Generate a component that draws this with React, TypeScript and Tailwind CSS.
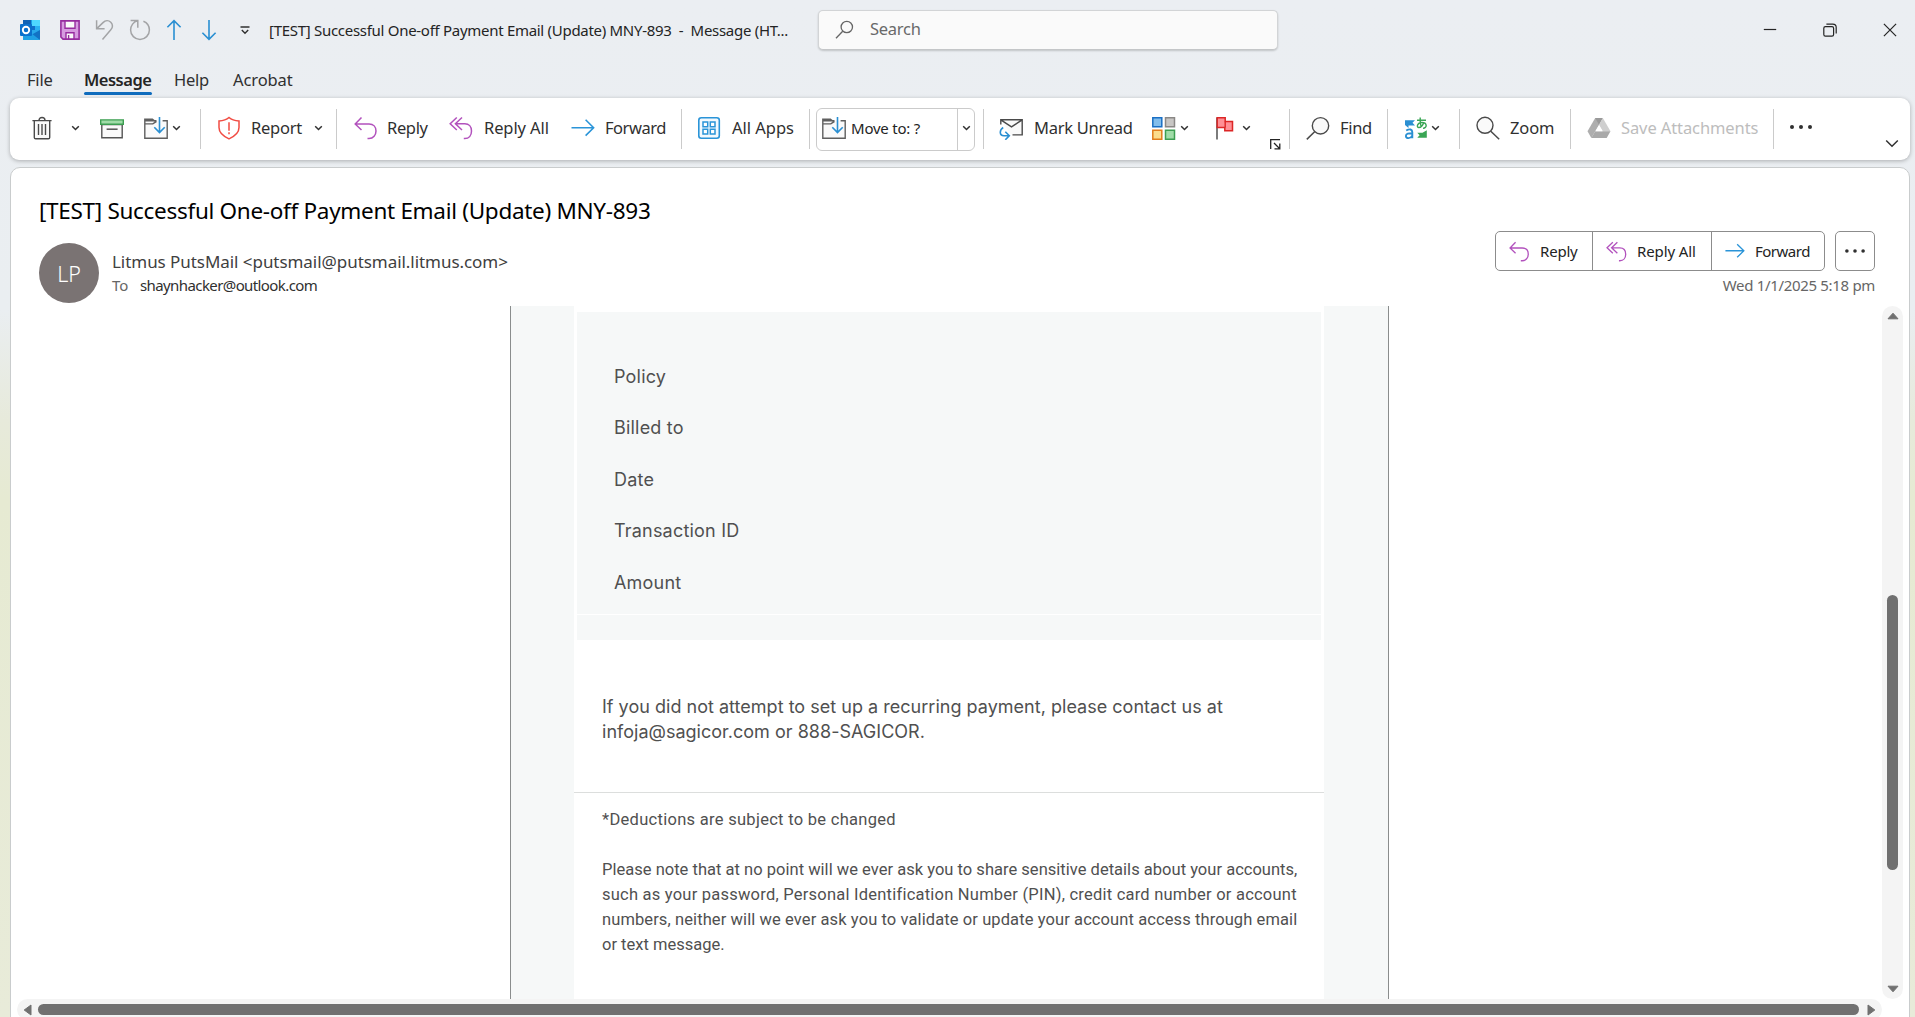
import React from "react";

type P = { className?: string };

const Chevron = ({ className = "" }: P) => (
  <svg width="10" height="8" viewBox="0 0 10 8" fill="none" stroke="#303030" strokeWidth="1.5" className={`shrink-0 ${className}`}>
    <path d="M1.2 2.2 4.5 5.500 7.800 2.200" />
  </svg>
);
const Sep = ({ className = "" }: P) => <div className={`h-10 w-px shrink-0 bg-[#cbcbcb] ${className}`} />;

const Icon = ({ className = "", size = 24, children }: { className?: string; size?: number; children: React.ReactNode }) => (
  <svg width={size} height={size} viewBox="0 0 24 24" fill="none" className={`shrink-0 ${className}`}>
    {children}
  </svg>
);

const ReplyIcon = ({ className = "", size = 24 }: P & { size?: number }) => (
  <Icon className={className} size={size}>
    <path d="M7.5 1.5 1.2 8l6.3 6M1.2 8H15c4.5 0 7 3 7 7s-2.7 7.6-7 7.6h-1.5" stroke="#b252bd" strokeWidth="1.5" />
  </Icon>
);
const ReplyAllIcon = ({ className = "", size = 24 }: P & { size?: number }) => (
  <Icon className={className} size={size}>
    <path d="M7.8 1.5 1.2 7.8l6.6 6.2M13 1.5 6.4 7.8l6.6 6.2M6.4 7.8h9.4c4.2 0 6.7 3 6.7 7.2 0 4.4-2.6 7.6-6.7 7.6h-1" stroke="#b252bd" strokeWidth="1.5" />
  </Icon>
);
const ForwardIcon = ({ className = "", size = 24 }: P & { size?: number }) => (
  <Icon className={className} size={size}>
    <path d="M.5 11.7h22M14.6 3.8l8 7.9-8 7.9" stroke="#2a94d8" strokeWidth="1.6" />
  </Icon>
);
const MoveFolderIcon = ({ className = "" }: P) => (
  <Icon className={className}>
    <path d="M.8 4.8h22.4v17.5H.8z" fill="#fafafa" />
    <path d="M12.5 4.8H.8v17.5h22.4V4.8h-4.6M.8 3.3h7.6l3.4 2.6-3 2H.8z" stroke="#5f5f5f" strokeWidth="1.4" />
    <path d="M15.5 1v16M10.3 11.3l5.2 5.3 5.2-5.3" stroke="#2a8fd2" strokeWidth="1.6" />
  </Icon>
);
const Dots = ({ className = "" }: P) => (
  <svg width="24" height="6" viewBox="0 0 24 6" fill="#303030" className={`shrink-0 ${className}`}>
    <circle cx="3" cy="3" r="2" />
    <circle cx="12" cy="3" r="2" />
    <circle cx="21" cy="3" r="2" />
  </svg>
);
const Label = ({ className = "", children }: { className?: string; children: React.ReactNode }) => (
  <span className={`shrink-0 whitespace-nowrap text-[16.5px] leading-6 ${className}`}>{children}</span>
);

const TitleBar = () => (
  <div className="flex h-[60px] shrink-0 items-center">
    <svg width="22" height="22" viewBox="0 0 22 22" className="ml-[19px] shrink-0">
      <path d="M4 2a1 1 0 0 1 1-1h15a1 1 0 0 1 1 1v9H4z" fill="#1a9de6" />
      <path d="M4 1h8v6H4z" fill="#0f62b5" />
      <path d="M13 1h8v6h-8z" fill="#4fd8ff" />
      <path d="M10 7h6v5h-6z" fill="#1170c9" />
      <path d="M16 7h5v5h-5z" fill="#2ab0f2" />
      <path d="M4 11h17v9a1 1 0 0 1-1 1H4z" fill="#28a8ea" />
      <path d="m21 11-9 5 9 5z" fill="#1272c4" />
      <path d="M4 14h8l9 7H5a1 1 0 0 1-1-1z" fill="#1fa0e4" />
      <rect x="1" y="5" width="12" height="12" rx="1" fill="#0a70cc" />
      <circle cx="7" cy="11" r="3.2" fill="none" stroke="#fff" strokeWidth="1.9" />
    </svg>
    <svg width="20" height="20" viewBox="0 0 20 20" className="ml-[19px] shrink-0">
      <path d="M.9.9h18.2v18.2H3L.9 17z" fill="#d69be0" stroke="#972d9f" strokeWidth="1.6" />
      <path d="M5 1h10v7.2H5z" fill="#fafafa" stroke="#972d9f" strokeWidth="1.4" />
      <path d="M6 19v-6.2h8V19z" fill="#fafafa" stroke="#972d9f" strokeWidth="1.4" />
      <path d="M8.6 15v4" stroke="#972d9f" strokeWidth="1.4" />
    </svg>
    <svg width="20" height="22" viewBox="0 0 20 22" fill="none" stroke="#a3a4a6" strokeWidth="1.5" className="ml-[15px] shrink-0">
      <path d="M1.6 1.2v8.6h8M1.8 9.6 8 3.6c2.4-2.4 5.7-2.3 7.8-.4 2.2 2.1 2.2 5.3 0 7.6L7.5 20.6" />
    </svg>
    <svg width="22" height="22" viewBox="0 0 22 22" fill="none" stroke="#a3a4a6" strokeWidth="1.5" className="ml-[14px] shrink-0">
      <path d="M1.600 1.600h7.200v7.200M8.600 1.800C4.500 2.800 1.600 6.600 1.600 11a9.400 9.400 0 1 0 18.800 0c0-4-2.500-7.400-6-8.800" />
    </svg>
    <svg width="16" height="22" viewBox="0 0 16 22" fill="none" stroke="#2a8fd2" strokeWidth="1.6" className="ml-[15px] shrink-0">
      <path d="M8 21V1.6M1.4 8.2 8 1.6l6.6 6.6" />
    </svg>
    <svg width="16" height="22" viewBox="0 0 16 22" fill="none" stroke="#2a8fd2" strokeWidth="1.6" className="ml-[19px] shrink-0">
      <path d="M8 1v19.4M1.4 13.8 8 20.4l6.6-6.6" />
    </svg>
    <svg width="10" height="9" viewBox="0 0 10 9" fill="none" stroke="#303030" strokeWidth="1.4" className="ml-[23px] shrink-0">
      <path d="M.5 1h9M1.8 4 5 7.2 8.2 4" />
    </svg>
    <span className="ml-[19px] w-[549px] shrink-0 whitespace-pre text-[15px] leading-6 tracking-[-0.29px] text-[#242424]">
      {"[TEST] Successful One-off Payment Email (Update) MNY-893  -  Message (HT..."}
    </span>
    <div className="flex h-10 w-[460px] shrink-0 items-center rounded-[5px] border border-[#d2d4d6] border-b-[#c4c6c8] bg-[#fafafa] shadow-[0_1px_2px_rgba(0,0,0,0.18)]">
      <svg width="20" height="20" viewBox="0 0 20 20" fill="none" stroke="#666" strokeWidth="1.3" className="ml-4 shrink-0">
        <circle cx="11.8" cy="7" r="5.7" />
        <path d="M7.7 11.2 1 18.2" />
      </svg>
      <span className="ml-[15px] mt-[-2px] text-[16.5px] leading-6 tracking-[-0.25px] text-[#696969]">Search</span>
    </div>
    <svg width="14" height="14" viewBox="0 0 14 14" stroke="#242424" strokeWidth="1.2" className="ml-auto shrink-0">
      <path d="M.8 6.5h12.4" />
    </svg>
    <svg width="14" height="14" viewBox="0 0 14 14" fill="none" stroke="#242424" strokeWidth="1.2" className="ml-[46px] shrink-0">
      <rect x=".8" y="3.6" width="9.8" height="9.6" rx="1.6" />
      <path d="M3.4 1.2h6.4a3.4 3.4 0 0 1 3.4 3.4v6" />
    </svg>
    <svg width="14" height="14" viewBox="0 0 14 14" stroke="#242424" strokeWidth="1.2" className="ml-[46px] mr-[18px] shrink-0">
      <path d="m.9.9 12.2 12.2M13.1.9.9 13.1" />
    </svg>
  </div>
);

const Tabs = () => (
  <div className="flex h-[38px] shrink-0 items-start pt-2 text-[16.5px] leading-6 text-[#303030]">
    <span className="ml-[27px] w-[57px] tracking-[-0.2px]">File</span>
    <div className="flex w-[68px] flex-col">
      <span className="whitespace-nowrap font-semibold tracking-[-0.5px] text-[#242424]">Message</span>
      <div className="h-[3px] rounded-full bg-[#0f6cbd]" />
    </div>
    <span className="ml-[22px] w-[59px] tracking-[-0.25px]">Help</span>
    <span className="tracking-[-0.1px]">Acrobat</span>
  </div>
);

const Ribbon = () => (
  <div className="ml-[10px] flex h-[62px] w-[1900px] shrink-0 items-center rounded-[9px] bg-white text-[#303030] shadow-[0_1px_4px_rgba(0,0,0,0.28)]">
    <Icon className="ml-5 -mt-[3px]">
      <path d="M4.5 5h15v16.5a1 1 0 0 1-1 1h-13a1 1 0 0 1-1-1z" fill="#fafafa" />
      <path d="M2.4 4.6h19.2M4.3 4.6v16.8c0 .8.5 1.3 1.3 1.3h12.8c.8 0 1.3-.5 1.3-1.3V4.6M9 4.3c0-1.8 1.2-2.8 3-2.8s3 1 3 2.8M8.5 8v11M12 8v11M15.5 8v11" stroke="#4a4a4a" strokeWidth="1.4" />
    </Icon>
    <Chevron className="ml-[17px] -mt-[3px]" />
    <Icon className="ml-[19px] -mt-[3px]">
      <path d="M1.8 8.5h20.4v13.2H1.8z" fill="#fafafa" stroke="#555" strokeWidth="1.4" />
      <path d="M.7 3.9h22.6v4.4H.7z" fill="#a0dca8" stroke="#3d9e52" strokeWidth="1.4" />
      <path d="M6.6 13.2h11" stroke="#555" strokeWidth="1.5" />
    </Icon>
    <MoveFolderIcon className="ml-[20px] -mt-[3px]" />
    <Chevron className="ml-[4px] -mt-[3px]" />
    <Sep className="ml-[18px]" />
    <Icon className="ml-4 -mt-[3px]">
      <path d="M12 1.500c2.500 2.300 5.800 3.300 10 3.500v6.600c0 5-3.700 8.500-10 11.300-6.300-2.800-10-6.300-10-11.300V5c4.200-.2 7.500-1.200 10-3.500zM12 6.300v8.400M12 16.200v2" stroke="#f14c43" strokeWidth="1.5" />
    </Icon>
    <Label className="ml-[10px] w-[51px] -mt-[2px] tracking-[-0.25px]">Report</Label>
    <Chevron className="ml-3 -mt-[3px]" />
    <Sep className="ml-3" />
    <ReplyIcon className="ml-[17px] -mt-[3px]" />
    <Label className="ml-[9px] -mt-[2px] w-[41px] tracking-[-0.35px]">Reply</Label>
    <ReplyAllIcon className="ml-[21px] -mt-[3px]" />
    <Label className="ml-[11px] -mt-[2px] w-[65px] tracking-[-0.1px]">Reply All</Label>
    <ForwardIcon className="ml-[22px] -mt-[3px]" />
    <Label className="ml-[10px] -mt-[2px] w-[61px] tracking-[-0.48px]">Forward</Label>
    <Sep className="ml-[15px]" />
    <Icon className="ml-[15px] -mt-[3px]">
      <rect x="1.8" y="1.8" width="20.5" height="20.5" rx="2.5" fill="#f2f9fe" stroke="#2a94d8" strokeWidth="1.6" />
      <path d="M6 6h4.7v4.7H6zM13.300 6H18v4.700h-4.700zM6 13.300h4.700V18H6zM13.300 13.300H18V18h-4.700z" fill="#fff" stroke="#2a94d8" strokeWidth="1.5" />
    </Icon>
    <Label className="ml-[11px] -mt-[2px] w-[62px] tracking-[-0.02px]">All Apps</Label>
    <Sep className="ml-[15px]" />
    <div className="ml-[6px] flex h-[43px] w-[159px] shrink-0 items-center rounded-[6px] border border-[#cbcbcb]">
      <MoveFolderIcon className="ml-[5px] -mt-[2px]" />
      <span className="ml-[5px] -mt-[2px] w-[106px] whitespace-nowrap text-[15px] leading-6 tracking-[-0.22px] text-[#242424]">Move to: ?</span>
      <div className="h-full w-px bg-[#cbcbcb]" />
      <Chevron className="ml-1 -mt-[2px]" />
    </div>
    <Sep className="ml-2" />
    <Icon className="ml-[15px] -mt-[3px]">
      <path d="M2 3.700h21v15.200H12" fill="#fafafa" />
      <path d="M1.800 8.500V3.700h21.400v15.200h-9.700M1.800 3.900l10.700 7 10.700-7" stroke="#4a4a4a" strokeWidth="1.4" />
      <path d="M4.200 11.500c-3.800 2.500-4.200 8 .8 8.300h4.600M6.300 15.700l4 4.100-4 4" stroke="#2a8fd2" strokeWidth="1.6" />
    </Icon>
    <Label className="ml-[11px] -mt-[2px] w-[99px] tracking-[-0.27px]">Mark Unread</Label>
    <Icon className="ml-[19px] -mt-[3px]">
      <path d="M.8 1.8h9v9h-9z" fill="#83beec" stroke="#1a6fc4" strokeWidth="1.5" />
      <path d="M13.5 1.8h9v9h-9z" fill="#c8c6c4" stroke="#8a8886" strokeWidth="1.5" />
      <path d="M.8 14.2h9v9h-9z" fill="#fbdc8c" stroke="#e07d1c" strokeWidth="1.5" />
      <path d="M13.5 14.2h9v9h-9z" fill="#a0dca8" stroke="#3d9e52" strokeWidth="1.5" />
    </Icon>
    <Chevron className="ml-1 -mt-[3px]" />
    <Icon className="ml-[23px] -mt-[3px]">
      <path d="M4 1.500v22" stroke="#444" strokeWidth="1.4" />
      <path d="M4.200 1.800h8v3.700h7.300v9.300h-7.700v-3.200H4.200z" fill="#ff8f95" stroke="#dc2626" strokeWidth="1.5" />
      <path d="M12.200 5.500v6" stroke="#dc2626" strokeWidth="1.4" />
    </Icon>
    <Chevron className="ml-[5px] -mt-[3px]" />
    <svg width="11" height="11" viewBox="0 0 11 11" fill="none" stroke="#242424" strokeWidth="1.3" className="ml-[18px] mt-[31px] shrink-0">
      <path d="M.7 10V.7H10M4 4l5.500 5.500M9.800 4.500v5.300H4.500" />
    </svg>
    <Sep className="ml-2" />
    <Icon className="ml-4 -mt-[3px]">
      <circle cx="14.5" cy="9.8" r="8.200" fill="#fafafa" stroke="#4a4a4a" strokeWidth="1.4" />
      <path d="M8.600 15.800.8 23.400" stroke="#4a4a4a" strokeWidth="1.5" />
    </Icon>
    <Label className="ml-[10px] -mt-[2px] w-[32px] tracking-[-0.3px]">Find</Label>
    <Sep className="ml-[15px]" />
    <Icon className="ml-4 -mt-[3px]">
      <path d="M1 4.200h10L8.500 6.800 11 9.400H4.500V12L1 9z" fill="#2a8fd2" />
      <path d="M2.200 14.500c3.500-2 6.100-1.300 6.100 1.800v6M8.300 17.200c-3.600 0-6.400.4-6.400 2.800 0 3 4.800 2.700 6.400-.4" stroke="#2a8fd2" strokeWidth="1.9" />
      <path d="M13 4.200h9M16.200 1.500c-.3 4 0 6.800 1 9.300M19.800 6.200c-1 3.300-3 5.300-5 5.300-2.600 0-1.600-5 3-5 5.500 0 5.700 5.500 1.200 5.900" stroke="#3aa655" strokeWidth="1.4" />
      <path d="M22.800 14.200v7.600h-9.500l2.300-2.500-2.300-2.500h5.200z" fill="#3aa655" />
    </Icon>
    <Chevron className="ml-[3px] -mt-[3px]" />
    <Sep className="ml-[18px]" />
    <Icon className="ml-4 -mt-[3px]">
      <circle cx="9" cy="9.300" r="8" fill="#fafafa" stroke="#4a4a4a" strokeWidth="1.4" />
      <path d="m14.800 15.200 8.400 8" stroke="#4a4a4a" strokeWidth="1.5" />
    </Icon>
    <Label className="ml-[10px] -mt-[2px] w-[44px] tracking-[-0.1px]">Zoom</Label>
    <Sep className="ml-4" />
    <Icon className="ml-4 -mt-[3px]">
      <path d="M8.200 2h7.600l-4 7.200L4.300 22 .5 15.300z" fill="#aeaeae" />
      <path d="M8.200 2h7.600l-3.800 6.800z" fill="#999" />
      <path d="M15.800 2l7.700 13.300h-7.700L12 8.800z" fill="#cfcfcf" />
      <path d="M8.200 15.300h15.300L19.700 22H4.300z" fill="#a9a9a9" />
      <path d="m12 9.200 3.500 6.100h-7z" fill="#fff" />
    </Icon>
    <Label className="ml-[10px] -mt-[2px] w-[138px] tracking-[-0.1px] text-[#bdbdbd]">Save Attachments</Label>
    <Sep className="ml-[14px]" />
    <Dots className="ml-[15px] -mt-[4px]" />
    <svg width="14" height="9" viewBox="0 0 14 9" fill="none" stroke="#303030" strokeWidth="1.5" className="ml-[72px] mt-[28px] shrink-0">
      <path d="M1.200 1.500 7 7.300l5.800-5.800" />
    </svg>
  </div>
);

const Action = ({ className = "", children }: { className?: string; children: React.ReactNode }) => (
  <div className={`flex h-full items-center border-[#8c8c8c] text-[15px] leading-6 text-[#242424] ${className}`}>{children}</div>
);

const Header = () => (
  <div className="flex h-[138px] shrink-0 justify-between pl-[28px] pr-[34px] pt-[27px]">
    <div className="flex flex-col">
      <h1 className="whitespace-nowrap text-[22.5px] leading-8 tracking-[-0.3px] text-black">
        [TEST] Successful One-off Payment Email (Update) MNY-893
      </h1>
      <div className="mt-4 flex">
        <div className="flex size-[60px] items-center justify-center rounded-full bg-[#7a7373] pt-[2px] text-[21.5px] font-light text-white">LP</div>
        <div className="ml-[13px] flex flex-col pt-[7px]">
          <span className="whitespace-nowrap text-[17px] leading-[23px] tracking-[-0.05px] text-[#404040]">Litmus PutsMail &lt;putsmail@putsmail.litmus.com&gt;</span>
          <span className="flex text-[15px] leading-6 text-[#303030]">
            <span className="w-[28px] text-[#666]">To</span>
            <span className="tracking-[-0.6px]">shaynhacker@outlook.com</span>
          </span>
        </div>
      </div>
    </div>
    <div className="mt-[36px] flex flex-col items-end">
      <div className="flex gap-[10px]">
        <div className="flex h-10 w-[330px] rounded-[5px] border border-[#8c8c8c]">
          <Action className="w-[97px] border-r pl-[13px]">
            <ReplyIcon size={21} />
            <span className="ml-[10px] -mt-px tracking-[-0.2px]">Reply</span>
          </Action>
          <Action className="w-[119px] border-r pl-[13px]">
            <ReplyAllIcon size={21} />
            <span className="ml-[10px] -mt-px tracking-[-0.1px]">Reply All</span>
          </Action>
          <Action className="pl-[13px]">
            <ForwardIcon size={20} />
            <span className="ml-[10px] -mt-px tracking-[-0.5px]">Forward</span>
          </Action>
        </div>
        <div className="flex size-10 items-center justify-center rounded-[5px] border border-[#8c8c8c]">
          <Dots className="-mt-px scale-90" />
        </div>
      </div>
      <span className="mt-[2px] text-[15px] leading-6 tracking-[-0.32px] text-[#666]">Wed 1/1/2025 5:18 pm</span>
    </div>
  </div>
);

const details = ["Policy", "Billed to", "Date", "Transaction ID", "Amount"];

const Email = () => (
  <div className="ml-[499px] flex h-[693px] w-[879px] shrink-0 border-x border-[#8a8d8d] bg-[#f6f8f8] pl-[63px] font-['Inter',sans-serif] text-[#505050]">
    <div className="flex w-[750px] flex-col bg-white">
      <div className="mx-[3px] mt-[6px] flex h-[302px] flex-col gap-[25.5px] bg-[#f6f8f8] pl-[37px] pt-[51.5px] text-[18px] leading-[26px]">
        {details.map((d) => (
          <span key={d} className="tracking-[0.2px]">{d}</span>
        ))}
      </div>
      <div className="mx-[3px] mt-px h-[25px] bg-[#f6f8f8]" />
      <p className="ml-[28px] mt-[54px] h-[98px] whitespace-nowrap text-[18px] leading-[25px] tracking-[0.02px]">
        If you did not attempt to set up a recurring payment, please contact us at
        <br />
        infoja@sagicor.com or 888-SAGICOR.
      </p>
      <div className="h-px bg-[#dcdedd]" />
      <div className="ml-[28px] mt-[14px] flex flex-col whitespace-nowrap font-['Roboto',sans-serif] text-[16.5px] leading-[25px]">
        <span className="tracking-[0.29px]">*Deductions are subject to be changed</span>
        <span className="mt-[25px] tracking-[0.02px]">Please note that at no point will we ever ask you to share sensitive details about your accounts,</span>
        <span className="tracking-[0.225px]">such as your password, Personal Identification Number (PIN), credit card number or account</span>
        <span className="tracking-[0.095px]">numbers, neither will we ever ask you to validate or update your account access through email</span>
        <span>or text message.</span>
      </div>
    </div>
  </div>
);

export default function App() {
  return (
    <div className="flex h-[1017px] w-[1915px] flex-col overflow-hidden bg-[linear-gradient(180deg,#ebeef2_0px,#eaeef1_310px,#e7eadb_420px,#e6ead2_500px,#e8ebd9_1017px)] font-['Noto_Sans',sans-serif]">
      <TitleBar />
      <Tabs />
      <Ribbon />
      <div className="ml-[10px] mt-[7px] flex h-[860px] w-[1900px] shrink-0 flex-col rounded-t-[10px] border border-[#c9cccd] bg-white">
        <Header />
        <div className="flex h-[693px] shrink-0">
          <Email />
          <div className="ml-[493px] flex w-[21px] flex-col items-center rounded-full bg-[#f4f4f4]">
            <svg width="12" height="8" viewBox="0 0 12 8" className="mt-[6px]" fill="#707070" stroke="#707070" strokeLinejoin="round">
              <path d="M6 1.200 11 6.800H1z" />
            </svg>
            <div className="mt-[275px] h-[275px] w-[11px] rounded-full bg-[#707070]" />
            <svg width="12" height="8" viewBox="0 0 12 8" className="mb-[6px] mt-auto" fill="#707070" stroke="#707070" strokeLinejoin="round">
              <path d="M6 6.800 11 1.200H1z" />
            </svg>
          </div>
        </div>
        <div className="ml-[6px] flex h-[21px] w-[1865px] shrink-0 items-center rounded-full bg-[#f4f4f4]">
          <svg width="9" height="12" viewBox="0 0 9 12" className="ml-[6px]" fill="#707070" stroke="#707070" strokeLinejoin="round">
            <path d="M1.200 6 8 1v10z" />
          </svg>
          <div className="ml-[6px] h-[11px] w-[1821px] rounded-full bg-[#707070]" />
          <svg width="9" height="12" viewBox="0 0 9 12" className="ml-[8px]" fill="#707070" stroke="#707070" strokeLinejoin="round">
            <path d="M7.800 6 1 1v10z" />
          </svg>
        </div>
      </div>
    </div>
  );
}
